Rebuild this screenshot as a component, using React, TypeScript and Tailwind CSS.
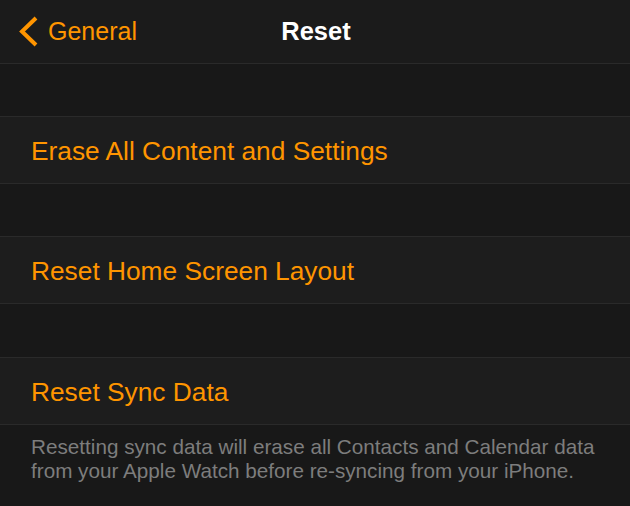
import React from 'react';

const rows = [
  { label: 'Erase All Content and Settings', gap: 'mt-[52px]' },
  { label: 'Reset Home Screen Layout', gap: 'mt-[52px]' },
  { label: 'Reset Sync Data', gap: 'mt-[53px]' },
];

const App = () => {
  return (
    <div className="min-h-[506px] w-[630px] bg-[#181818] font-['Liberation_Sans',Arial,sans-serif]">
      {/* Nav bar */}
      <div className="relative flex h-[64px] items-center border-b border-[#2a2a2a] bg-[#1b1b1b]">
        <div className="flex items-center pl-[18px] text-[#ff9500]">
          <svg width="21" height="31" viewBox="0 0 21 31" fill="none">
            <path d="M18 2 L4 15.5 L18 29" stroke="currentColor" strokeWidth="4" strokeLinecap="butt" strokeLinejoin="miter" />
          </svg>
          <span className="ml-[9px] text-[25px] leading-none">General</span>
        </div>
        <div className="pointer-events-none absolute inset-x-0 pl-[2px] text-center text-[25.5px] font-bold leading-none text-white">
          Reset
        </div>
      </div>

      {rows.map((row) => (
        <div key={row.label} className={`${row.gap} border-y border-[#2a2a2a] bg-[#1d1d1d]`}>
          <div className="flex h-[66px] items-center pl-[31px] pt-[3px] text-[26.3px] leading-none text-[#ff9500]">
            {row.label}
          </div>
        </div>
      ))}

      <p className="pl-[31px] pr-[20px] pt-[10px] text-[20.7px] leading-[24px] text-[#7d7d7d]">
        Resetting sync data will erase all Contacts and Calendar data from your Apple Watch before re-syncing from your iPhone.
      </p>
    </div>
  );
};

export default App;
